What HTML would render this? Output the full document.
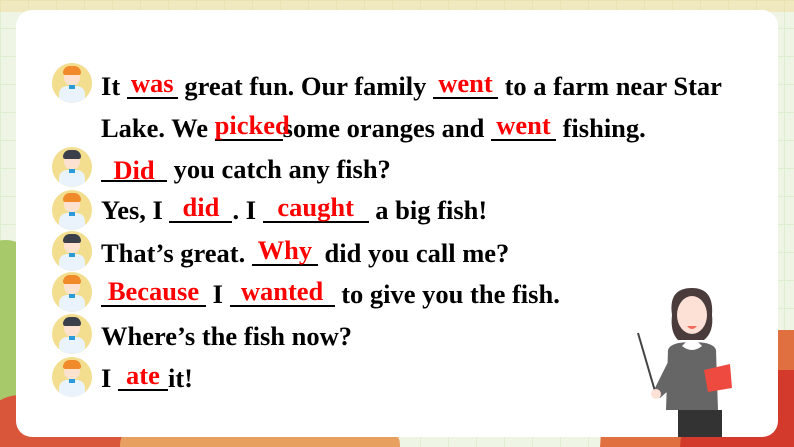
<!DOCTYPE html>
<html><head><meta charset="utf-8"><style>
html,body{margin:0;width:794px;height:447px;overflow:hidden;}
#w{position:relative;width:794px;height:447px;overflow:hidden;background:#eef5e4;font-family:"Liberation Serif",serif;}
.grid{position:absolute;inset:0;background-image:linear-gradient(#dfeed2 1px,transparent 1px),linear-gradient(90deg,#dfeed2 1px,transparent 1px);background-size:28px 28px;}
.card{position:absolute;left:16px;top:10px;width:762px;height:427px;background:#fff;border-radius:16px;}
.l{position:absolute;left:101px;font-size:26.5px;font-weight:bold;line-height:28px;white-space:nowrap;color:#000;}
.b{display:inline-block;text-align:center;color:#f00;border-bottom:2px solid #000;line-height:22px;position:relative;}
.b i{font-style:normal;position:relative;top:-3px;}
.av{position:absolute;left:52px;width:40px;height:40px;border-radius:50%;background:#f2de8e;overflow:hidden;}
.av .f{position:absolute;left:12px;top:6px;width:16px;height:17px;border-radius:50%;background:#fde3cf;}
.av .h{position:absolute;left:11px;top:3px;width:18px;height:9px;border-radius:9px 9px 3px 3px;}
.av .s{position:absolute;left:7px;top:23px;width:26px;height:18px;border-radius:8px 8px 0 0;background:#eaf3fb;}
.av .c{position:absolute;left:17px;top:22px;width:6px;height:4px;background:#2a9bd8;}
</style></head><body><div id="w">
<div class="grid"></div>
<div style="position:absolute;left:0;top:0;width:794px;height:12px;background:#f4d27a;opacity:.35"></div>
<div style="position:absolute;left:-30px;top:240px;width:70px;height:170px;border-radius:40px;background:#a8c96a"></div>
<div style="position:absolute;left:-20px;top:395px;width:360px;height:80px;border-radius:40px;background:#d9563a"></div>
<div style="position:absolute;left:120px;top:425px;width:280px;height:40px;background:#e8a060;border-radius:20px"></div>
<div style="position:absolute;left:600px;top:330px;width:260px;height:160px;border-radius:120px 0 0 0;background:#e07040"></div>
<div style="position:absolute;left:680px;top:370px;width:160px;height:120px;border-radius:80px 0 0 0;background:#d33a2c"></div>
<div class="card"></div>

<div class="av" style="top:63px"><div class="f"></div><div class="h" style="background:#f08a2a"></div><div class="s"></div><div class="c"></div></div>
<div class="av" style="top:147px"><div class="f"></div><div class="h" style="background:#3a3f4a"></div><div class="s"></div><div class="c"></div></div>
<div class="av" style="top:190px"><div class="f"></div><div class="h" style="background:#f08a2a"></div><div class="s"></div><div class="c"></div></div>
<div class="av" style="top:231px"><div class="f"></div><div class="h" style="background:#3a3f4a"></div><div class="s"></div><div class="c"></div></div>
<div class="av" style="top:272px"><div class="f"></div><div class="h" style="background:#f08a2a"></div><div class="s"></div><div class="c"></div></div>
<div class="av" style="top:314px"><div class="f"></div><div class="h" style="background:#3a3f4a"></div><div class="s"></div><div class="c"></div></div>
<div class="av" style="top:357px"><div class="f"></div><div class="h" style="background:#f08a2a"></div><div class="s"></div><div class="c"></div></div>

<div class="l" style="top:72px">It <span class="b" style="width:51px"><i>was</i></span> great fun. Our family <span class="b" style="width:65px"><i>went</i></span> to a farm near Star</div>
<div class="l" style="top:114px">Lake. We <span class="b" style="width:68px"><i>picked</i></span>some oranges and <span class="b" style="width:65px"><i>went</i></span> fishing.</div>
<div class="l" style="top:155px"><span class="b" style="width:66px"><i style="top:1px">Did</i></span> you catch any fish?</div>
<div class="l" style="top:196px">Yes, I <span class="b" style="width:63px"><i>did</i></span>. I <span class="b" style="width:106px"><i>caught</i></span> a big fish!</div>
<div class="l" style="top:239px">That’s great. <span class="b" style="width:66px"><i>Why</i></span> did you call me?</div>
<div class="l" style="top:280px"><span class="b" style="width:105px"><i>Because</i></span> I <span class="b" style="width:105px"><i>wanted</i></span> to give you the fish.</div>
<div class="l" style="top:322px">Where’s the fish now?</div>
<div class="l" style="top:364px">I <span class="b" style="width:50px"><i>ate</i></span>it!</div>

<svg style="position:absolute;left:630px;top:270px" width="120" height="170" viewBox="0 0 120 170">
<line x1="8" y1="63" x2="27" y2="128" stroke="#444" stroke-width="2"/>
<path d="M42 45 Q38 18 62 18 Q84 18 82 45 Q84 62 74 70 L48 70 Q40 62 42 45Z" fill="#4a3c3a"/>
<ellipse cx="62" cy="45" rx="15" ry="19" fill="#fde0d6"/>
<path d="M57 56 Q62 62 67 56Z" fill="#f26b5b"/>
<path d="M38 80 Q40 72 62 72 Q84 72 86 80 L88 140 L36 140Z" fill="#666"/>
<path d="M40 88 L24 120 L30 128 L48 112Z" fill="#666"/>
<circle cx="26" cy="124" r="5" fill="#fde0d6"/>
<path d="M52 76 Q62 84 72 76 L68 72 L56 72Z" fill="#fff"/>
<path d="M74 100 L100 94 L102 118 L78 122Z" fill="#ef4a40"/>
<rect x="48" y="140" width="44" height="27" fill="#333"/>
</svg>
</div></body></html>
